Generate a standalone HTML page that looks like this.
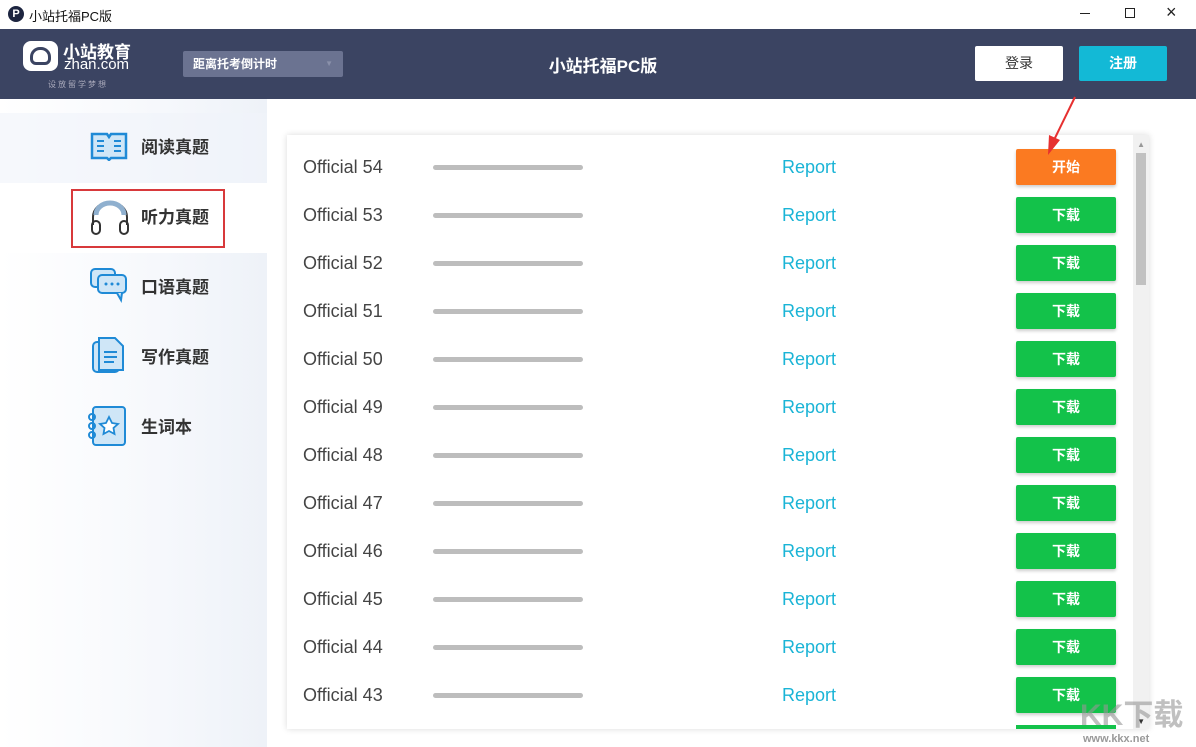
<!DOCTYPE html><html><head><meta charset="utf-8"><style>
*{margin:0;padding:0;box-sizing:border-box}
body{width:1196px;height:747px;overflow:hidden;background:#fff;font-family:"Liberation Sans","Noto Sans CJK SC",sans-serif;position:relative}
.abs{position:absolute}
.tb{top:0;left:0;width:1196px;height:29px;background:#fff;font-size:13px;color:#111}
.hd{top:29px;left:0;width:1196px;height:70px;background:#3b4462}
.side{top:99px;left:0;width:267px;height:648px;background:linear-gradient(90deg,#fff 0%,#f6f8fc 60%,#eef2f8 100%)}
.item{position:absolute;left:0;width:267px;height:70px;font-size:17px;font-weight:bold;color:#333}
.item span{position:absolute;left:141px;top:20px}
.card{left:287px;top:135px;width:862px;height:594px;background:#fff;box-shadow:0 0 6px rgba(0,0,0,.15)}
.row{position:absolute;left:0;width:845px;height:48px}
.row .n{position:absolute;left:16px;top:14px;font-size:18px;color:#444}
.row .bar{position:absolute;left:146px;top:22px;width:150px;height:5px;border-radius:3px;background:#bdbdbd}
.row .r{position:absolute;left:495px;top:14px;font-size:18px;color:#1ab4d6}
.row .b{position:absolute;left:729px;top:6px;width:100px;height:36px;border-radius:2px;background:#13c24a;color:#fff;font-size:14px;font-weight:bold;text-align:center;line-height:36px;box-shadow:0 2px 3px rgba(0,0,0,.2)}
</style></head><body>
<div class="abs tb">
<div class="abs" style="left:8px;top:6px;width:16px;height:16px;border-radius:50%;background:#1d2540;color:#fff;font-size:11px;font-weight:bold;text-align:center;line-height:16px">P</div>
<div class="abs" style="left:29px;top:6px">小站托福PC版</div>
<div class="abs" style="left:1080px;top:13px;width:10px;height:1px;background:#222"></div>
<div class="abs" style="left:1125px;top:8px;width:10px;height:10px;border:1px solid #222"></div>
<div class="abs" style="left:1166px;top:2px;font-size:18px;color:#222">×</div>
</div>
<div class="abs hd">
<div class="abs" style="left:23px;top:12px;width:35px;height:30px;background:#fff;border-radius:8px"></div>
<div class="abs" style="left:30px;top:18px;width:21px;height:18px;border:3px solid #3b4462;border-radius:10px 10px 6px 6px"></div>
<div class="abs" style="left:63px;top:9px;color:#fff;font-size:17px;font-weight:bold">小站教育</div>
<div class="abs" style="left:64px;top:27px;color:#fff;font-size:15px">zhan.com</div>
<div class="abs" style="left:48px;top:50px;color:#aab;font-size:8px;letter-spacing:2px">设放留学梦想</div>
<div class="abs" style="left:183px;top:22px;width:160px;height:26px;background:#6b7391;border-radius:2px;color:#fff;font-size:12px;font-weight:bold;line-height:26px;padding-left:10px">距离托考倒计时<span style="position:absolute;right:10px;top:0;color:#8a90aa;font-size:8px">▼</span></div>
<div class="abs" style="left:0;width:1196px;top:23px;text-align:center;color:#fff;font-size:17px;font-weight:bold;padding-left:10px">小站托福PC版</div>
<div class="abs" style="left:975px;top:17px;width:88px;height:35px;background:#fff;border-radius:2px;text-align:center;line-height:35px;font-size:14px;color:#333">登录</div>
<div class="abs" style="left:1079px;top:17px;width:88px;height:35px;background:#13b9d6;border-radius:2px;text-align:center;line-height:35px;font-size:14px;color:#fff;font-weight:bold">注册</div>
</div>
<div class="abs side">
<div class="item" style="top:14px;background:rgba(240,244,250,.6)"><svg class="abs" style="left:90px;top:18px" width="38" height="30"><path d="M2 3h15l2 3 2-3h15v24H21l-2 2-2-2H2z" fill="#cfe6f7" stroke="#1f8ad6" stroke-width="2.5"/><path d="M7 10h7M7 15h7M7 20h7M24 10h7M24 15h7M24 20h7" stroke="#1f8ad6" stroke-width="2"/></svg><span>阅读真题</span></div>
<div class="item" style="top:84px;background:#fff"><svg class="abs" style="left:89px;top:14px" width="42" height="40"><path d="M4 28V20a17 15 0 0 1 34 0v8" fill="none" stroke="#333" stroke-width="2"/><path d="M7 18a14 12 0 0 1 28 0" fill="none" stroke="#8fb0cf" stroke-width="5"/><rect x="3" y="24" width="8" height="13" rx="4" fill="none" stroke="#333" stroke-width="2"/><rect x="31" y="24" width="8" height="13" rx="4" fill="none" stroke="#333" stroke-width="2"/></svg><span>听力真题</span></div>
<div class="abs" style="left:71px;top:90px;width:154px;height:59px;border:2px solid #d8393b"></div>
<div class="item" style="top:154px"><svg class="abs" style="left:89px;top:14px" width="40" height="36"><rect x="2" y="2" width="24" height="18" rx="4" fill="#cfe6f7" stroke="#1f8ad6" stroke-width="2"/><rect x="9" y="8" width="28" height="18" rx="4" fill="#cfe6f7" stroke="#1f8ad6" stroke-width="2"/><path d="M28 26l4 7 1-7" fill="#cfe6f7" stroke="#1f8ad6" stroke-width="2"/><circle cx="17" cy="17" r="1.5" fill="#1f8ad6"/><circle cx="23" cy="17" r="1.5" fill="#1f8ad6"/><circle cx="29" cy="17" r="1.5" fill="#1f8ad6"/></svg><span>口语真题</span></div>
<div class="item" style="top:224px"><svg class="abs" style="left:91px;top:13px" width="36" height="38"><rect x="2" y="6" width="26" height="30" rx="4" fill="#cfe6f7" stroke="#1f8ad6" stroke-width="2"/><path d="M8 2h16l8 8v24H8z" fill="#cfe6f7" stroke="#1f8ad6" stroke-width="2"/><path d="M13 16h13M13 21h13M13 26h10" stroke="#1f8ad6" stroke-width="2"/></svg><span>写作真题</span></div>
<div class="item" style="top:294px"><svg class="abs" style="left:87px;top:12px" width="42" height="42"><rect x="6" y="2" width="32" height="38" rx="3" fill="#cfe6f7" stroke="#1f8ad6" stroke-width="2"/><circle cx="5" cy="12" r="3" fill="none" stroke="#1f8ad6" stroke-width="2"/><circle cx="5" cy="21" r="3" fill="none" stroke="#1f8ad6" stroke-width="2"/><circle cx="5" cy="30" r="3" fill="none" stroke="#1f8ad6" stroke-width="2"/><path d="M22 12l3 6 6 1-4.5 4 1 6-5.5-3-5.5 3 1-6-4.5-4 6-1z" fill="#fff" stroke="#1f8ad6" stroke-width="1.8"/></svg><span>生词本</span></div>
</div>
<div class="abs card">
<div class="abs" style="right:0;top:0;width:16px;height:594px;background:#f1f1f1"></div>
<div class="abs" style="right:3px;top:18px;width:10px;height:132px;background:#c1c1c1"></div>
<div class="abs" style="right:4px;top:5px;font-size:8px;color:#999">▲</div>
<div class="abs" style="right:4px;bottom:3px;font-size:8px;color:#333">▼</div>
<div class="row" style="top:8px"><div class="n">Official 54</div><div class="bar"></div><div class="r">Report</div><div class="b" style="background:#fb7a21">开始</div></div>
<div class="row" style="top:56px"><div class="n">Official 53</div><div class="bar"></div><div class="r">Report</div><div class="b">下载</div></div>
<div class="row" style="top:104px"><div class="n">Official 52</div><div class="bar"></div><div class="r">Report</div><div class="b">下载</div></div>
<div class="row" style="top:152px"><div class="n">Official 51</div><div class="bar"></div><div class="r">Report</div><div class="b">下载</div></div>
<div class="row" style="top:200px"><div class="n">Official 50</div><div class="bar"></div><div class="r">Report</div><div class="b">下载</div></div>
<div class="row" style="top:248px"><div class="n">Official 49</div><div class="bar"></div><div class="r">Report</div><div class="b">下载</div></div>
<div class="row" style="top:296px"><div class="n">Official 48</div><div class="bar"></div><div class="r">Report</div><div class="b">下载</div></div>
<div class="row" style="top:344px"><div class="n">Official 47</div><div class="bar"></div><div class="r">Report</div><div class="b">下载</div></div>
<div class="row" style="top:392px"><div class="n">Official 46</div><div class="bar"></div><div class="r">Report</div><div class="b">下载</div></div>
<div class="row" style="top:440px"><div class="n">Official 45</div><div class="bar"></div><div class="r">Report</div><div class="b">下载</div></div>
<div class="row" style="top:488px"><div class="n">Official 44</div><div class="bar"></div><div class="r">Report</div><div class="b">下载</div></div>
<div class="row" style="top:536px"><div class="n">Official 43</div><div class="bar"></div><div class="r">Report</div><div class="b">下载</div></div>
<div class="abs" style="left:729px;top:590px;width:100px;height:4px;background:#13c24a"></div>
</div>
<svg class="abs" style="left:1040px;top:95px;z-index:5" width="40" height="65"><path d="M35 2 L14 45" stroke="#e63030" stroke-width="2"/><path d="M8 60 L9 40 L20 45Z" fill="#e63030"/></svg>
<div class="abs" style="left:1080px;top:690px;font-size:30px;font-weight:bold;color:rgba(150,150,150,.6)">KK下载</div>
<div class="abs" style="left:1083px;top:733px;font-size:11px;font-weight:bold;color:#999">www.kkx.net</div>
</body></html>
